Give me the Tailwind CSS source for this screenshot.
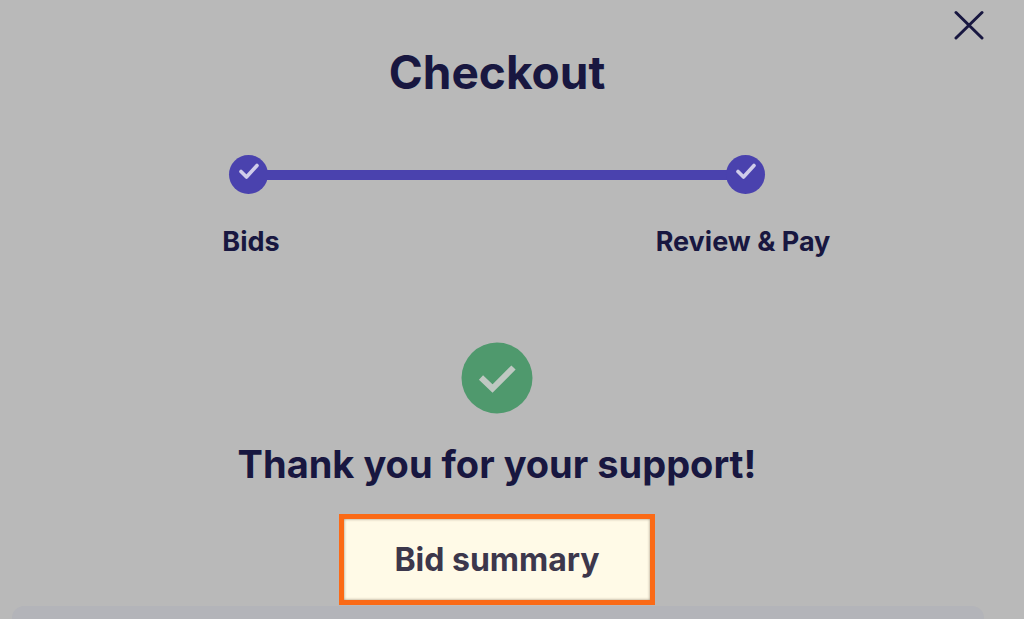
<!DOCTYPE html>
<html lang="en">
<head>
<meta charset="utf-8">
<meta name="viewport" content="width=device-width, initial-scale=1">
<title>Checkout</title>
<script src="https://cdn.jsdelivr.net/npm/@tailwindcss/browser@4"></script>
</head>
<body class="min-h-screen overflow-x-hidden bg-[#b9b9b9] font-['Inter','Open_Sans',sans-serif] font-bold text-[#181740]">
<div class="flex h-screen flex-col overflow-hidden pr-[30px]">
  <header class="grid grid-cols-[1fr_auto_1fr] items-start">
    <h1 class="col-start-2 pt-[42px] text-[46px] leading-[60px]">Checkout</h1>
    <button type="button" aria-label="Close" class="flex size-[50px] items-center justify-center justify-self-end">
      <svg class="size-[30px]" viewBox="0 0 30 30" fill="none" stroke="currentColor" stroke-width="3" stroke-linecap="round" aria-hidden="true"><path d="M2 2.500 28 28M28 2.500 2 28"/></svg>
    </button>
  </header>
  <main class="flex flex-1 flex-col items-center pt-[53px]">
    <div class="flex w-full max-w-[536px] items-center" aria-hidden="true">
      <span class="flex size-[39px] shrink-0 justify-center rounded-full bg-[#4a42ae] pt-2">
        <svg class="h-4 w-6" viewBox="0 0 24 16" fill="none" stroke="#d0cdea" stroke-width="3.600" stroke-linecap="round" stroke-linejoin="round"><path d="M4 8.500 9.500 14 20 2.500"/></svg>
      </span>
      <span class="-mx-1 h-[10px] flex-1 bg-[#4a42ae]"></span>
      <span class="flex size-[39px] shrink-0 justify-center rounded-full bg-[#4a42ae] pt-2">
        <svg class="h-4 w-6" viewBox="0 0 24 16" fill="none" stroke="#d0cdea" stroke-width="3.600" stroke-linecap="round" stroke-linejoin="round"><path d="M4 8.500 9.500 14 20 2.500"/></svg>
      </span>
    </div>
    <ol class="mt-8 flex w-full max-w-[672px] justify-between text-center text-[27px] leading-8">
      <li class="w-[180px]">Bids</li>
      <li class="w-[180px] whitespace-nowrap">Review &amp; Pay</li>
    </ol>
    <svg class="mt-[84px] size-[72px] shrink-0" viewBox="0 0 72 72" role="img" aria-label="Success">
      <circle cx="36" cy="36" r="35.500" fill="#4f996d"/>
      <path d="M20 35.500 31.500 46.500 52.500 25.500" fill="none" stroke="#bfc8c2" stroke-width="6"/>
    </svg>
    <h2 class="mt-[26px] text-[38px] leading-[48px]">Thank you for your support!</h2>
    <section class="mt-[26px] flex w-full flex-1 flex-col items-center">
      <h3 class="z-10 flex h-[91px] w-[316px] shrink-0 items-center justify-center border-5 border-[#fb6a16] bg-[#fffae7] text-[32px] text-[#3c374c] shadow-[inset_0_0_3px_#9b8c78]">Bid summary</h3>
      <div class="mt-px w-full pr-[10px] pl-[12px]"><div class="h-20 rounded-t-xl bg-[#b3b4b9]"></div></div>
    </section>
  </main>
</div>
</body>
</html>
